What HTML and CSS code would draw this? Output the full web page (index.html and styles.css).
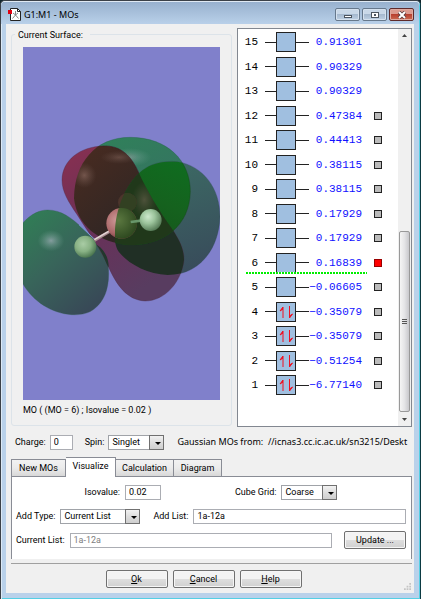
FILE: index.html
```html
<!DOCTYPE html>
<html lang="en">
<head>
<meta charset="utf-8">
<title>G1:M1 - MOs</title>
<meta name="viewport" content="width=device-width, initial-scale=1">
<link rel="stylesheet" href="styles.css">
</head>
<body>
<div class="window">
  <header class="titlebar">
    <svg class="app-icon" viewBox="0 0 13 13" aria-hidden="true">
      <path d="M2.500.5h7l3 3v9h-10z" fill="#fff" stroke="#222"/>
      <path d="M9.500.5v3h3" fill="none" stroke="#222"/>
      <path d="M7.500 3v4l-3 3.500M7.500 7l3 3.500M5 5l2.500 2L10 5" fill="none" stroke="#888"/>
      <rect x="0" y="2" width="4" height="4" fill="#e00010"/>
    </svg>
    <h1 class="title">G1:M1 - MOs</h1>
    <div class="window-buttons">
      <button class="win-btn" type="button" aria-label="Minimize"><svg viewBox="0 0 10 8"><rect x="1.500" y="4.500" width="7" height="2" fill="#fff" stroke="#4c5560"/></svg></button>
      <button class="win-btn" type="button" aria-label="Maximize"><svg viewBox="0 0 10 8"><rect x="1.500" y="1.500" width="7" height="5" fill="#fff" stroke="#4c5560"/><rect x="4" y="3" width="2" height="2" fill="#4c5560"/></svg></button>
      <button class="win-btn close" type="button" aria-label="Close"><svg viewBox="0 0 10 8"><path d="M2 1l6 6M8 1L2 7" stroke="#5a3a3c" stroke-width="3.600"/><path d="M2 1l6 6M8 1L2 7" stroke="#fff" stroke-width="2"/></svg></button>
    </div>
  </header>

  <main class="client">
    <div class="views">
      <fieldset class="surface">
        <legend>Current Surface:</legend>
        <svg class="molecule" viewBox="24 -219 591 1059" role="img" aria-label="Molecular orbital surface">
          <defs>
            <path id="top" d="M177 235C178 130 240 52 345 52C455 52 526 120 526 215C524 315 450 375 345 375C250 370 185 315 177 235Z"/>
            <path id="right" d="M300 350C298 265 335 195 372 160C400 132 440 121 487 125C565 138 615 205 615 290C612 385 555 465 458 465C400 462 345 435 315 400C303 385 300 370 300 350Z"/>
            <path id="red" d="M141 180C142 120 195 80 265 78C320 76 350 110 372 160C398 215 430 270 472 328C500 370 507 395 507 420C500 485 450 543 390 543C335 540 305 495 280 440C262 395 225 345 187 285C160 245 141 215 141 180Z"/>
            <clipPath id="in-top"><use href="#top"/></clipPath>
            <clipPath id="in-right"><use href="#right"/></clipPath>
            <clipPath id="in-red"><use href="#red"/></clipPath>
            <linearGradient id="g-left" x1="0" y1="0" x2=".7" y2="1"><stop offset="0" stop-color="#308055"/><stop offset=".5" stop-color="#38655a"/><stop offset="1" stop-color="#384957"/></linearGradient>
            <linearGradient id="g-top" x1=".3" y1="0" x2=".8" y2="1"><stop offset="0" stop-color="#30805a"/><stop offset="1" stop-color="#3a6868"/></linearGradient>
            <linearGradient id="g-right" x1=".5" y1="0" x2=".8" y2="1"><stop offset="0" stop-color="#3c6a64"/><stop offset="1" stop-color="#384a5a"/></linearGradient>
            <linearGradient id="g-red" x1="0" y1="0" x2=".5" y2="1"><stop offset="0" stop-color="#8a3050"/><stop offset=".5" stop-color="#6a3058"/><stop offset="1" stop-color="#583c60"/></linearGradient>
            <linearGradient id="g-brown" x1="0" y1="0" x2=".7" y2="1"><stop offset="0" stop-color="#4c2c20"/><stop offset=".6" stop-color="#302624"/><stop offset="1" stop-color="#331c24"/></linearGradient>
            <linearGradient id="g-green" x1=".8" y1="0" x2=".3" y2="1"><stop offset="0" stop-color="#0d7020"/><stop offset=".5" stop-color="#15621e"/><stop offset="1" stop-color="#16501a"/></linearGradient>
            <radialGradient id="shine"><stop offset="0" stop-color="#b8bccc" stop-opacity=".6"/><stop offset="1" stop-color="#80b0a0" stop-opacity="0"/></radialGradient>
            <radialGradient id="glow"><stop offset="0" stop-color="#b08a80" stop-opacity=".45"/><stop offset="1" stop-color="#806860" stop-opacity="0"/></radialGradient>
            <radialGradient id="hydrogen" cx=".38" cy=".35" r=".7"><stop offset="0" stop-color="#cde8cd"/><stop offset=".45" stop-color="#9cc49c"/><stop offset="1" stop-color="#4f7450"/></radialGradient>
            <radialGradient id="hydrogen-dim" cx=".4" cy=".38" r=".7"><stop offset="0" stop-color="#a9cca5"/><stop offset=".5" stop-color="#88b184"/><stop offset="1" stop-color="#3f6a45"/></radialGradient>
            <radialGradient id="boron" cx=".35" cy=".4" r=".7"><stop offset="0" stop-color="#cf9a98"/><stop offset=".6" stop-color="#aa6768"/><stop offset="1" stop-color="#6c3238"/></radialGradient>
            <radialGradient id="boron-green" cx=".4" cy=".4" r=".6"><stop offset="0" stop-color="#5b7840"/><stop offset="1" stop-color="#304b21"/></radialGradient>
          </defs>
          <rect x="24" y="-219" width="591" height="1059" fill="#8080cb"/>
          <path d="M24 308C50 280 75 270 98 270C140 270 170 295 200 322C235 355 272 395 280 440C285 500 270 540 240 565C220 582 195 585 170 584C110 580 55 545 24 492Z" fill="url(#g-left)" stroke="#305c50"/>
          <ellipse cx="108" cy="362" rx="40" ry="32" fill="url(#shine)"/>
          <use href="#top" fill="url(#g-top)" stroke="#205b45"/>
          <ellipse cx="344" cy="112" rx="65" ry="28" fill="url(#shine)" opacity=".7"/>
          <use href="#right" fill="url(#g-right)" stroke="#29464e"/>
          <use href="#red" fill="url(#g-red)" stroke="#4a2740"/>
          <g clip-path="url(#in-top)">
            <use href="#red" fill="url(#g-brown)" stroke="#282020"/>
            <ellipse cx="208" cy="166" rx="36" ry="38" fill="url(#glow)"/>
            <ellipse cx="312" cy="112" rx="56" ry="20" fill="url(#glow)" opacity=".7"/>
          </g>
          <path d="M244 374C262 382 282 410 281 442C272 430 265 400 244 374Z" fill="#22382d"/>
          <path d="M192 314L240 359" stroke="#779bd4" stroke-width="3"/>
          <g clip-path="url(#in-right)">
            <use href="#red" fill="#202f25"/>
            <use href="#top" fill="url(#g-green)" stroke="#19431c"/>
            <g clip-path="url(#in-red)">
              <use href="#top" fill="#20381a"/>
              <ellipse cx="388" cy="240" rx="38" ry="55" fill="url(#glow)" opacity=".7"/>
            </g>
          </g>
          <circle cx="337" cy="247" r="28" fill="#4c352c"/>
          <path d="M328 272l8-18" stroke="#2c271f" stroke-width="8"/>
          <path d="M238 361L286 333" stroke="#a88b90" stroke-width="9"/>
          <path d="M238 359L286 331" stroke="#e4d6d6" stroke-width="4"/>
          <circle cx="320" cy="310" r="46" fill="url(#boron)"/>
          <g clip-path="url(#in-right)">
            <circle cx="337" cy="247" r="28" fill="#324022"/>
            <circle cx="320" cy="310" r="46" fill="url(#boron-green)"/>
          </g>
          <path d="M347 306L378 302" stroke="#68966a" stroke-width="8"/>
          <circle cx="407" cy="300" r="33" fill="url(#hydrogen)"/>
          <circle cx="211" cy="380" r="33" fill="url(#hydrogen-dim)"/>
        </svg>
        <p class="caption">MO ( (MO = 6) ; Isovalue = 0.02 )</p>
      </fieldset>

      <section class="orbitals" aria-label="Orbital energies">
        <ol class="levels" id="levels"></ol>
        <div class="scrollbar" aria-hidden="true">
          <svg class="arrow" viewBox="0 0 7 4"><path d="M0 4l3.500-4L7 4z" fill="#444"/></svg>
          <div class="thumb"><i></i><i></i><i></i></div>
          <svg class="arrow" viewBox="0 0 7 4"><path d="M0 0h7L3.500 4z" fill="#444"/></svg>
        </div>
      </section>
    </div>

    <div class="state">
      <label for="charge">Charge:</label>
      <input class="field charge" id="charge" type="text" value="0">
      <label class="spin-label" for="spin">Spin:</label>
      <span class="combo spin"><select id="spin"><option>Singlet</option></select></span>
      <p class="source">Gaussian MOs from:&nbsp; //icnas3.cc.ic.ac.uk/sn3215/Deskt</p>
    </div>

    <div class="tabs" role="tablist">
      <button class="tab new" type="button" role="tab">New MOs</button>
      <button class="tab active" type="button" role="tab" aria-selected="true">Visualize</button>
      <button class="tab calc" type="button" role="tab">Calculation</button>
      <button class="tab diagram" type="button" role="tab">Diagram</button>
    </div>
    <section class="panel" role="tabpanel">
      <div class="row centered">
        <label for="iso">Isovalue:</label>
        <input class="field iso" id="iso" type="text" value="0.02">
        <label class="grid-label" for="grid">Cube Grid:</label>
        <span class="combo grid"><select id="grid"><option>Coarse</option></select></span>
      </div>
      <div class="row">
        <label for="type">Add Type:</label>
        <span class="combo type"><select id="type"><option>Current List</option></select></span>
        <label class="list-label" for="add">Add List:</label>
        <input class="field grow" id="add" type="text" value="1a-12a">
      </div>
      <div class="row">
        <label for="current">Current List:</label>
        <input class="field grow" id="current" type="text" value="1a-12a" disabled>
        <button class="btn update" type="button">Update ...</button>
      </div>
    </section>

    <footer class="actions">
      <button class="btn" type="button"><u>O</u>k</button>
      <button class="btn" type="button"><u>C</u>ancel</button>
      <button class="btn" type="button"><u>H</u>elp</button>
      <svg class="grip" viewBox="0 0 8 8" aria-hidden="true"><path d="M6 0h2v2H6zM3 3h2v2H3zM6 3h2v2H6zM0 6h2v2H0zM3 6h2v2H3zM6 6h2v2H6z" fill="#c4c4c4"/></svg>
    </footer>
  </main>
</div>
<script src="script.js"></script>
</body>
</html>
```
FILE: styles.css
```css
* { box-sizing: border-box; }

body {
  margin: 0;
  background: #10252c;
  color: #000;
  font: 9px/12px "Roboto", sans-serif;
}

h1, p, ol { margin: 0; padding: 0; font-weight: normal; }

button, input, select { font: inherit; color: inherit; margin: 0; }

.window {
  display: flex;
  flex-direction: column;
  min-height: 100vh;
  padding: 0 6px 6px 5px;
  background: #b9d1ea;
  border: 1px solid #3b4148;
  border-right-color: #0b3a42;
  border-bottom-color: #0b3a42;
  border-radius: 5px 5px 0 0;
  box-shadow: inset 0 1px #e4edf6, inset 1px 0 #dce9f6, inset -1px -1px #55cfe4;
}

.titlebar {
  display: flex;
  align-items: center;
  gap: 3px;
  height: 23px;
  margin: 0 -5px;
  padding: 4px 5px 0 7px;
  background: linear-gradient(#dfe9f3 0 1px, #98b1ce 1px, #b9d0e9);
  border-radius: 5px 5px 0 0;
}

.app-icon { width: 13px; height: 13px; }

.title, .source { font: 9px/14px "Noto Sans", sans-serif; }

.title { flex: 1; }

.window-buttons { display: flex; gap: 2px; }

.win-btn {
  display: flex;
  align-items: center;
  justify-content: center;
  width: 25px;
  height: 13px;
  padding: 0;
  border: 1px solid #66788c;
  border-radius: 2px;
  background: linear-gradient(#c9d8e8 0 50%, #a5b9cf 50%, #bfd1e4);
  box-shadow: inset 0 0 0 1px #d5e1ee;
}

.win-btn svg { width: 10px; height: 8px; }

.win-btn.close {
  border-color: #5e2a2a;
  background: linear-gradient(#dc9a8e 0 50%, #b8402f 50%, #cc6b52);
  box-shadow: inset 0 0 0 1px #dfa99f;
}

.client {
  flex: 1;
  display: flex;
  flex-direction: column;
  padding: 4px 2px 0 5px;
  background: #f0f0f0;
}

.views { display: flex; gap: 5px; }

.surface {
  flex: 1;
  min-width: 0;
  margin: 0 0 1px;
  padding: 6px 11px 9px;
  border: 1px solid #dce3e9;
  border-radius: 3px;
}

.surface legend { margin-left: -8px; padding: 1px 7px 0 3px; }

.molecule { display: block; width: 100%; }

.caption { padding-top: 4px; }

.orbitals {
  display: flex;
  width: 175px;
  background: #fff;
  border: 1px solid #828790;
}

.levels { position: relative; flex: 1; padding-top: 1px; list-style: none; }

.level {
  display: flex;
  align-items: center;
  height: 24px;
  font: 11px/12px "Liberation Mono", monospace;
}

.level:nth-child(even) { height: 25px; }

.level label { display: flex; align-items: center; }

.index { width: 20px; margin-right: 7px; text-align: right; }

.wire { width: 11px; height: 1px; background: #222; }

.wire.out { width: 13px; }

.box {
  width: 20px;
  height: 20px;
  border: 1px solid #222;
  background: #a0bfe0;
}

.box svg { display: block; width: 18px; height: 18px; }

.energy { width: 53px; color: #1010ff; text-align: right; white-space: pre; }

.mark {
  appearance: none;
  width: 8px;
  height: 8px;
  margin-left: 12px;
  border: 1px solid #222;
  background: #bbb;
}

.mark:checked { background: #f00; border-color: #900; }

.gap-line {
  position: absolute;
  top: 243px;
  left: 8px;
  width: 121px;
  height: 2px;
  background: repeating-linear-gradient(90deg, #0e0 0 2px, #fff 2px 3px);
}

.scrollbar {
  display: flex;
  flex-direction: column;
  align-items: center;
  width: 13px;
  padding: 5px 1px;
  background: #f0f0f0;
}

.arrow { width: 5px; height: 3px; }

.thumb {
  display: flex;
  flex-direction: column;
  align-items: center;
  justify-content: center;
  gap: 1px;
  width: 11px;
  height: 181px;
  margin: auto 0 6px;
  border: 1px solid #999;
  border-radius: 2px;
  background: linear-gradient(90deg, #f5f5f5, #e4e4e6 50%, #c8c8cc);
}

.thumb i { width: 5px; height: 1px; background: #555; }

.state {
  display: flex;
  align-items: center;
  padding: 7px 0 0 4px;
  height: 23px;
  white-space: nowrap;
}

.field {
  height: 15px;
  min-width: 0;
  padding: 0 3px;
  border: 1px solid #abadb3;
  border-radius: 0;
  background: #fff;
}

.field:disabled { color: #808080; background: #fff; }

.grow { flex: 1; }

.charge { width: 23px; margin-left: 4px; }

.spin-label { margin-left: 12px; }

.combo {
  position: relative;
  display: flex;
  height: 15px;
  background: #fff;
  border: 1px solid #a0a3a8;
}

.combo select {
  appearance: none;
  width: 100%;
  padding: 0 14px 0 3px;
  border: 0;
  border-radius: 0;
  background: none;
}

.combo::before {
  content: "";
  position: absolute;
  inset: -1px -1px -1px auto;
  width: 13px;
  border: 1px solid #707070;
  background: linear-gradient(#f2f2f2, #ddd 50%, #cfcfcf);
}

.combo::after {
  content: "";
  position: absolute;
  top: 6px;
  right: 2px;
  border: solid transparent;
  border-width: 3px 3px 0;
  border-top-color: #000;
}

.spin { width: 56px; margin-left: 4px; }

.source { margin-left: 13px; }

.tabs { display: flex; align-items: flex-end; height: 20px; margin-top: 7px; }

.tab {
  height: 18px;
  padding: 0 0 1px;
  border: 1px solid #898c95;
  border-left-width: 0;
  background: linear-gradient(#f2f2f2, #ebebeb 50%, #d8d8d8);
}

.tab.new { width: 55px; border-left-width: 1px; }
.tab.calc { width: 58px; }
.tab.diagram { width: 48px; }

.tab.active {
  position: relative;
  height: 20px;
  width: 50px;
  padding-bottom: 3px;
  background: #fff;
  border-bottom: 0;
}

.panel {
  display: flex;
  flex-direction: column;
  gap: 6px;
  margin-top: -1px;
  padding: 6px 5px 10px 4px;
  background: #fff;
  border: solid #898c95;
  border-width: 1px 1px 0;
}

.row { display: flex; align-items: center; height: 18px; white-space: nowrap; }

.row .field, .row > .combo { margin-left: 5px; }

.centered { justify-content: center; }

.iso { width: 36px; }
.grid-label { margin-left: 74px; }
.grid { width: 56px; }
.type { width: 80px; }
.list-label { margin-left: 13px; }

.btn {
  width: 62px;
  height: 18px;
  padding: 0;
  border: 1px solid #707070;
  border-radius: 2px;
  background: linear-gradient(#f3f3f3 0 50%, #dedede 50%, #d0d0d0);
  box-shadow: inset 0 0 0 1px #f6f6f6;
}

.update { margin-left: 12px; }

.actions {
  position: relative;
  display: flex;
  justify-content: center;
  gap: 5px;
  margin-top: 4px;
  padding: 6px 16px 5px 0;
  border-top: 1px solid #a0a0a0;
}

.grip { position: absolute; right: 1px; bottom: 3px; width: 7px; height: 7px; }
```
FILE: script.js
```javascript
const levels = [
  [15, "0.91301"], [14, "0.90329"], [13, "0.90329"], [12, "0.47384"],
  [11, "0.44413"], [10, "0.38115"], [9, "0.38115"], [8, "0.17929"],
  [7, "0.17929"], [6, "0.16839"], [5, "\u22120.06605"], [4, "\u22120.35079"],
  [3, "\u22120.35079"], [2, "\u22120.51254"], [1, "\u22126.77140"]
];

const spins = '<svg viewBox="0 0 18 18"><path d="M6 15V4L3 8L6 6M12.500 3v12l3-4l-3 2" fill="#f01020" stroke="#f01020"/></svg>';

document.getElementById("levels").innerHTML = levels.map(([n, energy]) => `
  <li class="level"><label for="mo${n}">
    <span class="index">${n}</span><span class="wire"></span>
    <span class="box">${n <= 4 ? spins : ""}</span><span class="wire out"></span>
    <span class="energy">${energy}</span></label>
    ${n <= 12 ? `<input class="mark" type="checkbox" id="mo${n}"${n === 6 ? " checked" : ""}>` : ""}
  </li>`).join("") + '<li class="gap-line" aria-hidden="true"></li>';
```
